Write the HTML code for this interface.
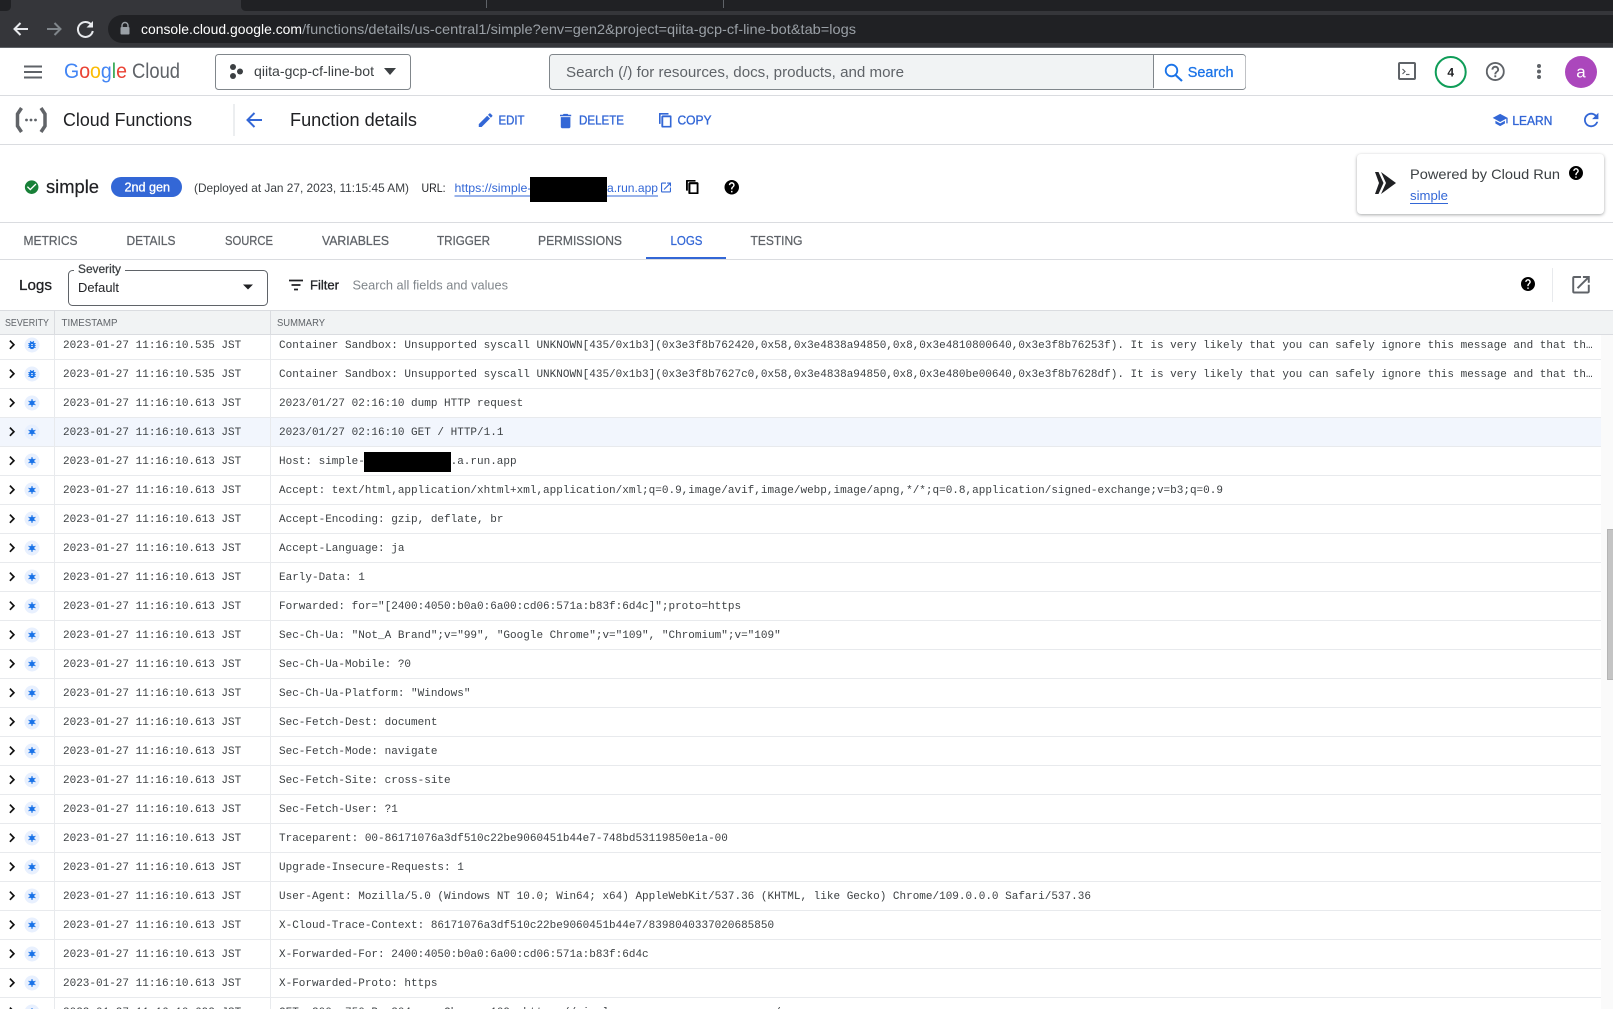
<!DOCTYPE html>
<html lang="en">
<head>
<meta charset="utf-8">
<title>Cloud Functions</title>
<style>
html,body{margin:0;padding:0;width:1613px;height:1009px;overflow:hidden;background:#fff}
#top{position:absolute;left:0;top:0;display:block}
#top text{font-family:"Liberation Sans",sans-serif}
#logs{position:absolute;left:0;top:335px;width:1601px;height:674px;overflow:hidden;background:#fff}
.r{position:absolute;left:0;width:1601px;height:29px;box-sizing:border-box;border-bottom:1px solid #e8eaed;font:11px/30px "Liberation Mono",monospace;color:#3c4043;white-space:pre}
.r svg{position:absolute;left:0;top:0}
.r b{position:absolute;left:54px;top:0;bottom:-1px;width:1px;background:#e8eaed}
.r i{position:absolute;left:270px;top:0;bottom:-1px;width:1px;background:#e8eaed}
.r span{position:absolute;font-style:normal;font-weight:400}
.t{left:63px}
.s{left:279px}
.sel{background:#f2f6fd}
#track{position:absolute;left:1601px;top:335px;width:12px;height:674px;background:#fafafa}
#thumb{position:absolute;left:1607px;top:529px;width:6px;height:151px;background:#c4c4c4;box-shadow:inset 1px 0 0 #b4b4b4,inset 0 1px 0 #b4b4b4,inset 0 -1px 0 #b4b4b4}
</style>
</head>
<body>
<svg width="0" height="0" style="position:absolute">
<defs>
<symbol id="help" viewBox="2 2 20 20"><path d="M12 2C6.48 2 2 6.48 2 12s4.48 10 10 10 10-4.48 10-10S17.52 2 12 2zm1 17h-2v-2h2v2zm2.07-7.75l-.9.92C13.45 12.9 13 13.5 13 15h-2v-.5c0-1.1.45-2.1 1.17-2.83l1.24-1.26c.37-.36.59-.86.59-1.41 0-1.1-.9-2-2-2s-2 .9-2 2H8c0-2.21 1.79-4 4-4s4 1.79 4 4c0 .88-.36 1.68-.93 2.25z"/></symbol>
<symbol id="helpo" viewBox="2 2 20 20"><path d="M11 18h2v-2h-2v2zm1-16C6.48 2 2 6.48 2 12s4.48 10 10 10 10-4.48 10-10S17.52 2 12 2zm0 18c-4.41 0-8-3.59-8-8s3.59-8 8-8 8 3.59 8 8-3.59 8-8 8zm0-14c-2.21 0-4 1.79-4 4h2c0-1.1.9-2 2-2s2 .9 2 2c0 2-3 1.75-3 5h2c0-2.25 3-2.5 3-5 0-2.21-1.79-4-4-4z"/></symbol>
<symbol id="copy" viewBox="2 1 19 22"><path d="M16 1H4c-1.1 0-2 .9-2 2v14h2V3h12V1zm3 4H8c-1.1 0-2 .9-2 2v14c0 1.1.9 2 2 2h11c1.1 0 2-.9 2-2V7c0-1.1-.9-2-2-2zm0 16H8V7h11v14z"/></symbol>
<symbol id="open" viewBox="3 3 18 18"><path d="M19 19H5V5h7V3H5a2 2 0 0 0-2 2v14a2 2 0 0 0 2 2h14c1.1 0 2-.9 2-2v-7h-2v7zM14 3v2h3.59l-9.83 9.83 1.41 1.41L19 6.41V10h2V3h-7z"/></symbol>
<symbol id="dbg" viewBox="0 0 24 24"><path d="M20 8h-2.81c-.45-.78-1.07-1.45-1.82-1.96L17 4.41 15.59 3l-2.17 2.17C12.96 5.06 12.49 5 12 5c-.49 0-.96.06-1.41.17L8.41 3 7 4.41l1.62 1.63C7.88 6.55 7.26 7.22 6.81 8H4v2h2.09c-.05.33-.09.66-.09 1v1H4v2h2v1c0 .34.04.67.09 1H4v2h2.81c1.04 1.79 2.97 3 5.19 3s4.15-1.21 5.19-3H20v-2h-2.09c.05-.33.09-.66.09-1v-1h2v-2h-2v-1c0-.34-.04-.67-.09-1H20V8zm-6 8h-4v-2h4v2zm0-4h-4v-2h4v2z"/></symbol>
<g id="chev"><path d="M9.900 9.600l4 4.100-4 4.100" fill="none" stroke="#111" stroke-width="1.700"/></g>
<g id="ci"><circle cx="32" cy="14" r="7.500" fill="#e8f0fe"/><circle cx="32" cy="14" r="2.500" fill="#1a73e8"/><path d="M32 10v8M28.500 12l7 4M35.500 12l-7 4" stroke="#1a73e8" stroke-width="1"/></g>
<g id="cd"><circle cx="32" cy="14" r="7.500" fill="#e8f0fe"/><use href="#dbg" x="26.500" y="8.500" width="11" height="11" fill="#1a73e8"/></g>
</defs>
</svg>

<div id="logs">
<div class="r" style="top:-4px"><svg width="54" height="28"><use href="#chev"/><use href="#cd"/></svg><b></b><i></i><span class="t">2023-01-27 11:16:10.535 JST</span><span class="s">Container Sandbox: Unsupported syscall UNKNOWN[435/0x1b3](0x3e3f8b762420,0x58,0x3e4838a94850,0x8,0x3e4810800640,0x3e3f8b76253f). It is very likely that you can safely ignore this message and that th…</span></div>
<div class="r" style="top:25px"><svg width="54" height="28"><use href="#chev"/><use href="#cd"/></svg><b></b><i></i><span class="t">2023-01-27 11:16:10.535 JST</span><span class="s">Container Sandbox: Unsupported syscall UNKNOWN[435/0x1b3](0x3e3f8b7627c0,0x58,0x3e4838a94850,0x8,0x3e480be00640,0x3e3f8b7628df). It is very likely that you can safely ignore this message and that th…</span></div>
<div class="r" style="top:54px"><svg width="54" height="28"><use href="#chev"/><use href="#ci"/></svg><b></b><i></i><span class="t">2023-01-27 11:16:10.613 JST</span><span class="s">2023/01/27 02:16:10 dump HTTP request</span></div>
<div class="r sel" style="top:83px"><svg width="54" height="28"><use href="#chev"/><use href="#ci"/></svg><b></b><i></i><span class="t">2023-01-27 11:16:10.613 JST</span><span class="s">2023/01/27 02:16:10 GET / HTTP/1.1</span></div>
<div class="r" style="top:112px"><svg width="54" height="28"><use href="#chev"/><use href="#ci"/></svg><b></b><i></i><span class="t">2023-01-27 11:16:10.613 JST</span><span class="s">Host: simple-</span><span style="left:450.6px">.a.run.app</span><span style="left:364px;top:5px;width:87px;height:20px;background:#000"></span></div>
<div class="r" style="top:141px"><svg width="54" height="28"><use href="#chev"/><use href="#ci"/></svg><b></b><i></i><span class="t">2023-01-27 11:16:10.613 JST</span><span class="s">Accept: text/html,application/xhtml+xml,application/xml;q=0.9,image/avif,image/webp,image/apng,*/*;q=0.8,application/signed-exchange;v=b3;q=0.9</span></div>
<div class="r" style="top:170px"><svg width="54" height="28"><use href="#chev"/><use href="#ci"/></svg><b></b><i></i><span class="t">2023-01-27 11:16:10.613 JST</span><span class="s">Accept-Encoding: gzip, deflate, br</span></div>
<div class="r" style="top:199px"><svg width="54" height="28"><use href="#chev"/><use href="#ci"/></svg><b></b><i></i><span class="t">2023-01-27 11:16:10.613 JST</span><span class="s">Accept-Language: ja</span></div>
<div class="r" style="top:228px"><svg width="54" height="28"><use href="#chev"/><use href="#ci"/></svg><b></b><i></i><span class="t">2023-01-27 11:16:10.613 JST</span><span class="s">Early-Data: 1</span></div>
<div class="r" style="top:257px"><svg width="54" height="28"><use href="#chev"/><use href="#ci"/></svg><b></b><i></i><span class="t">2023-01-27 11:16:10.613 JST</span><span class="s">Forwarded: for="[2400:4050:b0a0:6a00:cd06:571a:b83f:6d4c]";proto=https</span></div>
<div class="r" style="top:286px"><svg width="54" height="28"><use href="#chev"/><use href="#ci"/></svg><b></b><i></i><span class="t">2023-01-27 11:16:10.613 JST</span><span class="s">Sec-Ch-Ua: "Not_A Brand";v="99", "Google Chrome";v="109", "Chromium";v="109"</span></div>
<div class="r" style="top:315px"><svg width="54" height="28"><use href="#chev"/><use href="#ci"/></svg><b></b><i></i><span class="t">2023-01-27 11:16:10.613 JST</span><span class="s">Sec-Ch-Ua-Mobile: ?0</span></div>
<div class="r" style="top:344px"><svg width="54" height="28"><use href="#chev"/><use href="#ci"/></svg><b></b><i></i><span class="t">2023-01-27 11:16:10.613 JST</span><span class="s">Sec-Ch-Ua-Platform: "Windows"</span></div>
<div class="r" style="top:373px"><svg width="54" height="28"><use href="#chev"/><use href="#ci"/></svg><b></b><i></i><span class="t">2023-01-27 11:16:10.613 JST</span><span class="s">Sec-Fetch-Dest: document</span></div>
<div class="r" style="top:402px"><svg width="54" height="28"><use href="#chev"/><use href="#ci"/></svg><b></b><i></i><span class="t">2023-01-27 11:16:10.613 JST</span><span class="s">Sec-Fetch-Mode: navigate</span></div>
<div class="r" style="top:431px"><svg width="54" height="28"><use href="#chev"/><use href="#ci"/></svg><b></b><i></i><span class="t">2023-01-27 11:16:10.613 JST</span><span class="s">Sec-Fetch-Site: cross-site</span></div>
<div class="r" style="top:460px"><svg width="54" height="28"><use href="#chev"/><use href="#ci"/></svg><b></b><i></i><span class="t">2023-01-27 11:16:10.613 JST</span><span class="s">Sec-Fetch-User: ?1</span></div>
<div class="r" style="top:489px"><svg width="54" height="28"><use href="#chev"/><use href="#ci"/></svg><b></b><i></i><span class="t">2023-01-27 11:16:10.613 JST</span><span class="s">Traceparent: 00-86171076a3df510c22be9060451b44e7-748bd53119850e1a-00</span></div>
<div class="r" style="top:518px"><svg width="54" height="28"><use href="#chev"/><use href="#ci"/></svg><b></b><i></i><span class="t">2023-01-27 11:16:10.613 JST</span><span class="s">Upgrade-Insecure-Requests: 1</span></div>
<div class="r" style="top:547px"><svg width="54" height="28"><use href="#chev"/><use href="#ci"/></svg><b></b><i></i><span class="t">2023-01-27 11:16:10.613 JST</span><span class="s">User-Agent: Mozilla/5.0 (Windows NT 10.0; Win64; x64) AppleWebKit/537.36 (KHTML, like Gecko) Chrome/109.0.0.0 Safari/537.36</span></div>
<div class="r" style="top:576px"><svg width="54" height="28"><use href="#chev"/><use href="#ci"/></svg><b></b><i></i><span class="t">2023-01-27 11:16:10.613 JST</span><span class="s">X-Cloud-Trace-Context: 86171076a3df510c22be9060451b44e7/8398040337020685850</span></div>
<div class="r" style="top:605px"><svg width="54" height="28"><use href="#chev"/><use href="#ci"/></svg><b></b><i></i><span class="t">2023-01-27 11:16:10.613 JST</span><span class="s">X-Forwarded-For: 2400:4050:b0a0:6a00:cd06:571a:b83f:6d4c</span></div>
<div class="r" style="top:634px"><svg width="54" height="28"><use href="#chev"/><use href="#ci"/></svg><b></b><i></i><span class="t">2023-01-27 11:16:10.613 JST</span><span class="s">X-Forwarded-Proto: https</span></div>
<div class="r" style="top:663px"><svg width="54" height="28"><use href="#chev"/><use href="#ci"/></svg><b></b><i></i><span class="t">2023-01-27 11:16:10.692 JST</span><span class="s">GET  200  750 B  304 ms  Chrome 109  https://simple-xxxxxxxxxx-uc.a.run.app/</span></div>
</div>
<div id="track"></div><div id="thumb"></div>

<svg id="top" width="1613" height="335" viewBox="0 0 1613 335">
<!-- browser chrome -->
<rect width="1613" height="48" fill="#202124"/>
<path d="M6 11c3 0 5-2 5-5V0h230v6c0 3 2 5 5 5z" fill="#35363a"/>
<rect y="11" width="1613" height="36" fill="#35363a"/>
<rect x="0" y="47" width="1613" height="1" fill="#5f6368"/>
<rect x="486" y="0" width="1" height="8" fill="#5f6368"/>
<rect x="723" y="0" width="1" height="8" fill="#5f6368"/>
<path d="M122 15H1613V43H122a14 14 0 0 1 0-28z" fill="#202124"/>
<path d="M28 29H15M20.500 23l-6 6 6 6" fill="none" stroke="#e8eaed" stroke-width="2"/>
<path d="M60.500 29H47M54.500 23l6 6-6 6" fill="none" stroke="#80868b" stroke-width="2"/>
<path d="M91.500 25a7.500 7.500 0 1 0 1.300 6" fill="none" stroke="#e8eaed" stroke-width="2"/>
<path d="M93 21v6.500h-6.500z" fill="#e8eaed"/>
<path d="M122 27v-1.500a3 3 0 0 1 6 0V27" fill="none" stroke="#9aa0a6" stroke-width="1.400"/>
<rect x="120.500" y="27" width="9" height="7.500" rx="1" fill="#9aa0a6"/>
<text x="141" y="34" font-size="14" fill="#fff" textLength="161" lengthAdjust="spacingAndGlyphs">console.cloud.google.com</text>
<text x="302" y="34" font-size="14" fill="#9aa0a6" textLength="554" lengthAdjust="spacingAndGlyphs">/functions/details/us-central1/simple?env=gen2&amp;project=qiita-gcp-cf-line-bot&amp;tab=logs</text>

<!-- app bar -->
<rect y="48" width="1613" height="287" fill="#fff"/>
<path d="M24 66.500h18M24 72h18M24 77.500h18" stroke="#5f6368" stroke-width="2"/>
<text x="64" y="78" font-size="21" textLength="63" lengthAdjust="spacingAndGlyphs"><tspan fill="#4285f4">G</tspan><tspan fill="#ea4335">o</tspan><tspan fill="#fbbc05">o</tspan><tspan fill="#4285f4">g</tspan><tspan fill="#34a853">l</tspan><tspan fill="#ea4335">e</tspan></text>
<text x="132" y="78" font-size="21" fill="#5f6368" textLength="48" lengthAdjust="spacingAndGlyphs">Cloud</text>
<rect x="215.500" y="54.500" width="195" height="35" rx="3" fill="#fff" stroke="#80868b"/>
<circle cx="233" cy="67" r="3" fill="#3c4043"/><circle cx="233" cy="76" r="3" fill="#3c4043"/><circle cx="240" cy="71.500" r="3" fill="#3c4043"/>
<text x="254" y="76" font-size="14" fill="#3c4043" textLength="120" lengthAdjust="spacingAndGlyphs">qiita-gcp-cf-line-bot</text>
<path d="M384 68h12l-6 7z" fill="#3c4043"/>
<rect x="549.500" y="54.500" width="696" height="35" rx="3" fill="#f1f3f4" stroke="#80868b"/>
<path d="M1154 55h88.500a3 3 0 0 1 3 3v28a3 3 0 0 1-3 3H1154z" fill="#fff"/>
<rect x="1153" y="55" width="1" height="33" fill="#80868b"/>
<text x="566" y="77" font-size="15" fill="#5f6368" textLength="338" lengthAdjust="spacingAndGlyphs">Search (/) for resources, docs, products, and more</text>
<circle cx="1171.500" cy="70.500" r="5.800" fill="none" stroke="#1a73e8" stroke-width="1.800"/>
<path d="M1175.500 75l6.500 6" stroke="#1a73e8" stroke-width="2.200"/>
<text x="1187.800" y="77" font-size="15" fill="#1a73e8" stroke="#1a73e8" stroke-width=".3" textLength="45.700" lengthAdjust="spacingAndGlyphs">Search</text>
<rect x="1399" y="63" width="16" height="16" rx="1" fill="none" stroke="#5f6368" stroke-width="2"/>
<path d="M1402.500 69l2.500 2.500-2.500 2.500" fill="none" stroke="#5f6368" stroke-width="1.200"/><path d="M1406 74.500h3.500" stroke="#5f6368" stroke-width="1.200"/>
<circle cx="1450.700" cy="72" r="15" fill="#fff" stroke="#0f9d58" stroke-width="2"/>
<text x="1450.700" y="76.500" font-size="12" font-weight="700" text-anchor="middle" fill="#202124">4</text>
<use href="#helpo" x="1485.800" y="62" width="19" height="19" fill="#5f6368"/>
<circle cx="1539" cy="66" r="2" fill="#5f6368"/><circle cx="1539" cy="71.500" r="2" fill="#5f6368"/><circle cx="1539" cy="77" r="2" fill="#5f6368"/>
<circle cx="1581" cy="72" r="16" fill="#ab47bc"/>
<text x="1581" y="77.500" font-size="17" text-anchor="middle" fill="#fff">a</text>
<rect y="95" width="1613" height="1" fill="#dadce0"/>

<!-- function bar -->
<path d="M21.500 108l-4 6v12l4 6M41 108l4 6v12l-4 6" fill="none" stroke="#616468" stroke-width="3.500"/>
<circle cx="26.500" cy="120" r="1.400" fill="#5f6368"/><circle cx="31" cy="120" r="1.400" fill="#5f6368"/><circle cx="35.500" cy="120" r="1.400" fill="#5f6368"/>
<text x="63" y="126" font-size="18" fill="#202124" textLength="129" lengthAdjust="spacingAndGlyphs">Cloud Functions</text>
<rect x="233.500" y="104" width="1" height="32" fill="#dadce0"/>
<path d="M262 120h-14M254.500 113l-7 7 7 7" fill="none" stroke="#3367d6" stroke-width="2"/>
<text x="290" y="126" font-size="18" fill="#202124" textLength="127" lengthAdjust="spacingAndGlyphs">Function details</text>
<path transform="translate(476.500 111) scale(.76)" fill="#3367d6" d="M3 17.250V21h3.750L17.810 9.940l-3.750-3.750L3 17.250zM20.710 7.040a1 1 0 0 0 0-1.410l-2.340-2.340a1 1 0 0 0-1.410 0l-1.830 1.830 3.750 3.750 1.830-1.830z"/>
<g font-size="12.500" fill="#3367d6" stroke="#3367d6" stroke-width=".35">
<text x="498.500" y="124.500" textLength="26" lengthAdjust="spacingAndGlyphs">EDIT</text>
<text x="579" y="124.500" textLength="45" lengthAdjust="spacingAndGlyphs">DELETE</text>
<text x="677.500" y="124.500" textLength="34" lengthAdjust="spacingAndGlyphs">COPY</text>
<text x="1512.400" y="125" textLength="40" lengthAdjust="spacingAndGlyphs">LEARN</text>
</g>
<path transform="translate(556 111.500) scale(.8)" fill="#3367d6" d="M6 19c0 1.100.9 2 2 2h8c1.100 0 2-.9 2-2V7H6v12zM19 4h-3.500l-1-1h-5l-1 1H5v2h14V4z"/>
<use href="#copy" x="659" y="113" width="12.500" height="14.500" fill="#3367d6" stroke="#3367d6" stroke-width=".9"/>
<path transform="translate(1492 111.800) scale(.68)" fill="#3367d6" d="M5 13.180v4L12 21l7-3.820v-4L12 17l-7-3.820zM12 3L1 9l11 6 9-4.910V17h2V9L12 3z"/>
<path transform="translate(1580.400 109.200) scale(.9)" fill="#3367d6" d="M17.650 6.350C16.200 4.900 14.210 4 12 4c-4.420 0-7.990 3.580-7.990 8s3.570 8 7.990 8c3.730 0 6.840-2.550 7.730-6h-2.080c-.82 2.330-3.040 4-5.650 4-3.310 0-6-2.690-6-6s2.690-6 6-6c1.660 0 3.140.69 4.220 1.780L13 11h7V4l-2.350 2.350z"/>
<rect y="144" width="1613" height="1" fill="#dadce0"/>

<!-- function summary -->
<path transform="translate(23.500 179) scale(.68)" fill="#188038" d="M12 2C6.480 2 2 6.480 2 12s4.480 10 10 10 10-4.480 10-10S17.520 2 12 2zm-2 15l-5-5 1.410-1.410L10 14.170l7.590-7.590L19 8l-9 9z"/>
<text x="46" y="193" font-size="18" fill="#202124" stroke="#202124" stroke-width=".2" textLength="53" lengthAdjust="spacingAndGlyphs">simple</text>
<rect x="111" y="177" width="71" height="20" rx="10" fill="#3367d6"/>
<text x="124.500" y="191.500" font-size="12.500" fill="#fff" stroke="#fff" stroke-width=".3" textLength="45.500" lengthAdjust="spacingAndGlyphs">2nd gen</text>
<text x="194" y="192" font-size="12" fill="#3c4043" textLength="215" lengthAdjust="spacingAndGlyphs">(Deployed at Jan 27, 2023, 11:15:45 AM)</text>
<text x="421.500" y="192" font-size="12" fill="#202124" textLength="24" lengthAdjust="spacingAndGlyphs">URL:</text>
<text x="454.500" y="192" font-size="12" fill="#3367d6" textLength="77" lengthAdjust="spacingAndGlyphs">https://simple-</text>
<text x="607" y="192" font-size="12" fill="#3367d6" textLength="51" lengthAdjust="spacingAndGlyphs">a.run.app</text>
<rect x="454.500" y="195.500" width="203.500" height="1" fill="#3367d6"/>
<rect x="530" y="177" width="77" height="25" fill="#000"/>
<use href="#open" x="660.500" y="182.500" width="11" height="10" fill="#3367d6"/>
<use href="#copy" x="686" y="180" width="12.500" height="14" fill="#000" stroke="#000" stroke-width="1.200"/>
<use href="#help" x="724.500" y="180" width="14.500" height="14.500" fill="#000"/>
<rect x="1357" y="154" width="247" height="60" rx="4" fill="#fff" style="filter:drop-shadow(0 1px 1.500px rgba(60,64,67,.45))"/>
<path d="M1381 172l15 11-15 11 5-11zM1375 172h3.500l5 11-5 11H1375l4-11z" fill="#202124"/>
<text x="1410" y="179" font-size="14" fill="#3c4043" textLength="150" lengthAdjust="spacingAndGlyphs">Powered by Cloud Run</text>
<use href="#help" x="1569" y="166" width="14" height="14" fill="#000"/>
<text x="1410" y="200" font-size="13" fill="#3367d6" textLength="38" lengthAdjust="spacingAndGlyphs">simple</text>
<rect x="1410" y="203" width="38" height="1" fill="#3367d6"/>
<rect y="222" width="1613" height="1" fill="#dadce0"/>

<!-- tabs -->
<g font-size="12.500" fill="#5f6368" stroke="#5f6368" stroke-width=".25">
<text x="23.500" y="245" textLength="54" lengthAdjust="spacingAndGlyphs">METRICS</text>
<text x="126.500" y="245" textLength="49" lengthAdjust="spacingAndGlyphs">DETAILS</text>
<text x="225" y="245" textLength="48" lengthAdjust="spacingAndGlyphs">SOURCE</text>
<text x="322" y="245" textLength="67" lengthAdjust="spacingAndGlyphs">VARIABLES</text>
<text x="437" y="245" textLength="53" lengthAdjust="spacingAndGlyphs">TRIGGER</text>
<text x="538" y="245" textLength="84" lengthAdjust="spacingAndGlyphs">PERMISSIONS</text>
<text x="670.500" y="245" textLength="32" lengthAdjust="spacingAndGlyphs" fill="#3367d6" stroke="#3367d6">LOGS</text>
<text x="750.500" y="245" textLength="52" lengthAdjust="spacingAndGlyphs">TESTING</text>
</g>
<rect x="646" y="257" width="80" height="2" fill="#3367d6"/>
<rect y="259" width="1613" height="1" fill="#dadce0"/>

<!-- logs toolbar -->
<text x="19" y="290" font-size="15" fill="#202124" stroke="#202124" stroke-width=".3" textLength="33" lengthAdjust="spacingAndGlyphs">Logs</text>
<rect x="68.500" y="270.500" width="199" height="35" rx="4" fill="#fff" stroke="#5f6368"/>
<rect x="74" y="268" width="51" height="5" fill="#fff"/>
<text x="78" y="273" font-size="11.500" fill="#3c4043" stroke="#3c4043" stroke-width=".25" textLength="43" lengthAdjust="spacingAndGlyphs">Severity</text>
<text x="78" y="292" font-size="13" fill="#202124" textLength="41" lengthAdjust="spacingAndGlyphs">Default</text>
<path d="M243 284.500h10l-5 5z" fill="#202124"/>
<path d="M289 280.500h14M291.500 285h9M294 289.500h4" stroke="#202124" stroke-width="1.800"/>
<text x="310" y="289.500" font-size="13" fill="#202124" stroke="#202124" stroke-width=".3" textLength="29" lengthAdjust="spacingAndGlyphs">Filter</text>
<text x="352.500" y="289.500" font-size="13" fill="#80868b" textLength="155.500" lengthAdjust="spacingAndGlyphs">Search all fields and values</text>
<use href="#help" x="1521" y="277" width="14" height="14" fill="#000"/>
<rect x="1552" y="268" width="1" height="34" fill="#e8eaed"/>
<use href="#open" x="1572" y="276" width="18" height="17.500" fill="#5f6368"/>

<!-- table header -->
<rect y="310" width="1613" height="25" fill="#f1f3f4"/>
<rect y="310" width="1613" height="1" fill="#dadce0"/>
<rect y="334" width="1613" height="1" fill="#dadce0"/>
<rect x="54" y="311" width="1" height="23" fill="#dadce0"/>
<rect x="270" y="311" width="1" height="23" fill="#dadce0"/>
<g font-size="10" fill="#5f6368">
<text x="5" y="326" textLength="44" lengthAdjust="spacingAndGlyphs">SEVERITY</text>
<text x="61.500" y="326" textLength="56" lengthAdjust="spacingAndGlyphs">TIMESTAMP</text>
<text x="277" y="326" textLength="48" lengthAdjust="spacingAndGlyphs">SUMMARY</text>
</g>
</svg>
</body>
</html>
